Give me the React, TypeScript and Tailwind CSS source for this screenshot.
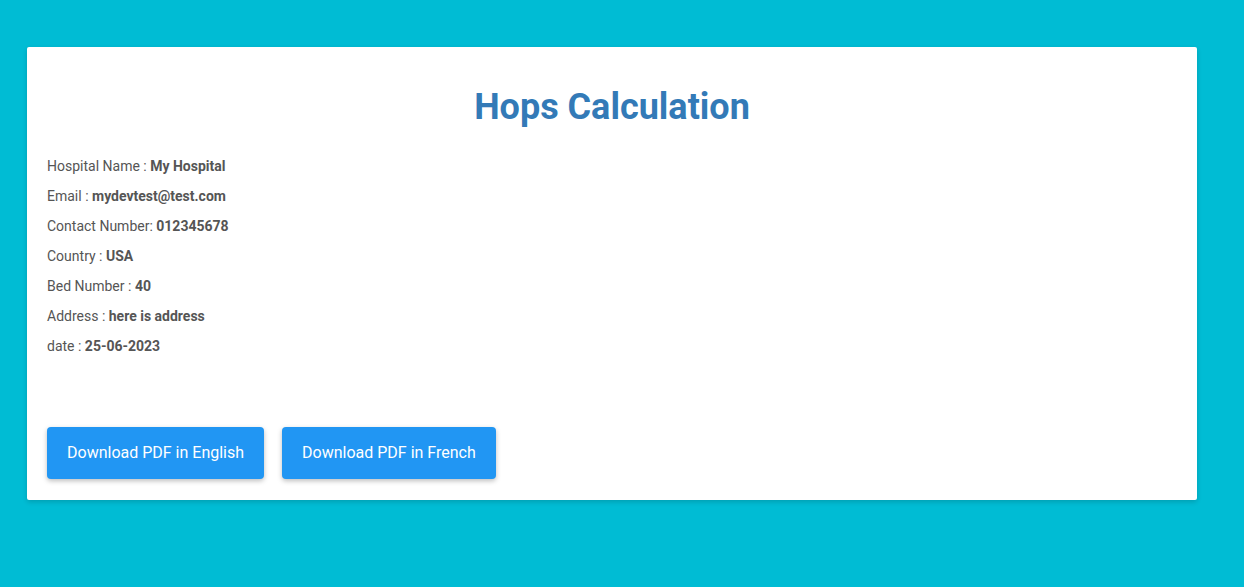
const info = [
  { label: "Hospital Name : ", value: "My Hospital" },
  { label: "Email : ", value: "mydevtest@test.com" },
  { label: "Contact Number: ", value: "012345678" },
  { label: "Country : ", value: "USA" },
  { label: "Bed Number : ", value: "40" },
  { label: "Address : ", value: "here is address" },
  { label: "date : ", value: "25-06-2023" },
];

export default function App() {
  return (
    <div className="min-h-[587px] bg-[#00bcd4] pt-[47px] px-[27px] font-['Roboto',sans-serif] w-[1244px]">
      <div className="w-[1170px] bg-white rounded-[2px] shadow-[0_2px_5px_rgba(0,0,0,0.16)] px-5 pt-5 pb-[21px]">
        <h1 className="text-center text-[36px] leading-[40px] font-bold text-[#337ab7] mt-5 mb-[29px]">
          Hops Calculation
        </h1>
        <div className="flex flex-col gap-[10px] text-[14px] leading-[20px] text-[#555]">
          {info.map((row) => (
            <p key={row.label}>
              {row.label}
              <b className="font-bold">{row.value}</b>
            </p>
          ))}
        </div>
        <div className="flex gap-[18px] mt-[71px]">
          <button className="h-[52px] px-5 rounded-[4px] bg-[#2196f3] text-white text-[16px] shadow-[0_2px_5px_rgba(0,0,0,0.26)]">
            Download PDF in English
          </button>
          <button className="h-[52px] px-5 rounded-[4px] bg-[#2196f3] text-white text-[16px] shadow-[0_2px_5px_rgba(0,0,0,0.26)]">
            Download PDF in French
          </button>
        </div>
      </div>
    </div>
  );
}
